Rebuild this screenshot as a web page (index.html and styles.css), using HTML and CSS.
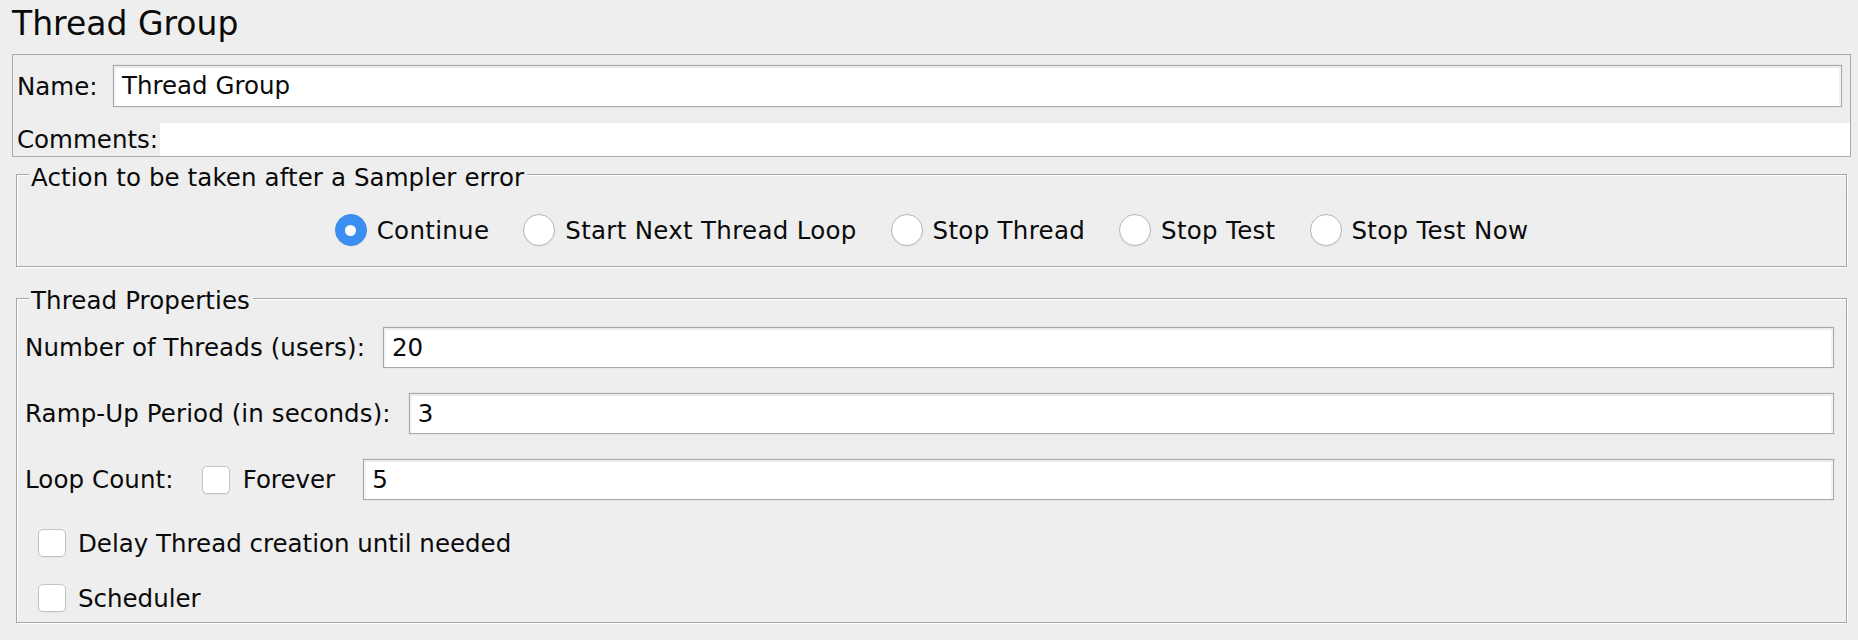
FILE: index.html
```html
<!DOCTYPE html>
<html lang="en">
<head>
<meta charset="utf-8">
<title>Thread Group</title>
<link rel="stylesheet" href="styles.css">
</head>
<body>
<div class="page">
  <h1 class="title">Thread Group</h1>

  <div class="panel">
    <div class="row name-row">
      <label class="name-label">Name:</label>
      <div class="field">Thread Group</div>
    </div>
    <div class="row comments-row">
      <label class="comments-label">Comments:</label>
      <div class="comments-area"></div>
    </div>
  </div>

  <section class="group action-group">
    <div class="group-head"><span class="group-title">Action to be taken after a Sampler error</span></div>
    <div class="group-body radios">
      <div class="radio-item"><span class="radio checked"></span><span>Continue</span></div>
      <div class="radio-item"><span class="radio"></span><span>Start Next Thread Loop</span></div>
      <div class="radio-item"><span class="radio"></span><span>Stop Thread</span></div>
      <div class="radio-item"><span class="radio"></span><span>Stop Test</span></div>
      <div class="radio-item"><span class="radio"></span><span>Stop Test Now</span></div>
    </div>
  </section>

  <section class="group props-group">
    <div class="group-head props-head"><span class="group-title">Thread Properties</span></div>
    <div class="group-body props-body">
      <div class="prop-row">
        <label class="prop-label">Number of Threads (users):</label>
        <div class="field">20</div>
      </div>
      <div class="prop-row">
        <label class="prop-label">Ramp-Up Period (in seconds):</label>
        <div class="field">3</div>
      </div>
      <div class="prop-row loop-row">
        <label class="prop-label">Loop Count:</label>
        <span class="checkbox loop-check"></span>
        <span class="forever">Forever</span>
        <div class="field">5</div>
      </div>
      <div class="check-row delay-row">
        <span class="checkbox"></span>
        <span>Delay Thread creation until needed</span>
      </div>
      <div class="check-row sched-row">
        <span class="checkbox"></span>
        <span>Scheduler</span>
      </div>
    </div>
  </section>
</div>
</body>
</html>
```

FILE: styles.css
```css
html, body {
  margin: 0;
  padding: 0;
  background: #eeeeee;
}

body {
  font-family: "DejaVu Sans", "Liberation Sans", sans-serif;
  font-size: 24.5px;
  color: #0a0a0a;
  width: 1858px;
  height: 640px;
  overflow: hidden;
}

.page {
  padding: 0 7px 0 12px;
}

.title {
  margin: 0;
  height: 54px;
  box-sizing: border-box;
  padding-top: 2px;
  font-size: 33px;
  font-weight: normal;
  line-height: 44px;
}

/* top name/comments panel */
.panel {
  border: 1px solid #a9a9a9;
  padding: 10px 8px 0 4px;
}

.row {
  display: flex;
  align-items: center;
}

.name-row {
  height: 42px;
}

.name-label {
  width: 96px;
  flex: none;
}

.field {
  flex: 1;
  height: 42px;
  box-sizing: border-box;
  background: #fff;
  border: 1px solid #a9a9a9;
  box-shadow: inset 0 2px 0 #ececec, inset 2px 0 0 #f3f3f3, inset -2px 0 0 #f3f3f3, 0 0 0 1px #e6e6e6;
  padding: 0 8px;
  display: flex;
  align-items: center;
  line-height: 28px;
}

.comments-row {
  margin-top: 16px;
  height: 33px;
}

.comments-label {
  flex: none;
}

.comments-area {
  flex: 1;
  align-self: stretch;
  background: #fff;
  margin-left: 2px;
  margin-right: -9px;
  border-right: 1px solid #a9a9a9;
}

/* titled groups */
.group {
  margin: 0 4px;
}

.action-group {
  margin-top: 7px;
}

.props-group {
  margin-top: 20px;
}

.group-head {
  display: flex;
  height: 28px;
  line-height: 28px;
}

.group-head::before {
  content: "";
  flex: none;
  width: 12px;
  margin-top: 10px;
  border-top: 1px solid #a6a6a6;
  border-left: 1px solid #a6a6a6;
  box-shadow: inset 1px 1px 0 #fff;
}

.group-head::after {
  content: "";
  flex: 1;
  margin-top: 10px;
  margin-left: 3px;
  border-top: 1px solid #a6a6a6;
  border-right: 1px solid #a6a6a6;
  box-shadow: inset 0 1px 0 #fff, 1px 0 0 #fff;
}

.props-head::before,
.props-head::after {
  margin-top: 11px;
}

.group-title {
  flex: none;
  padding-left: 2px;
  white-space: nowrap;
  letter-spacing: 0.1px;
}

.group-body {
  border: 1px solid #a6a6a6;
  border-top: none;
  box-shadow: inset 1px 0 0 #fff, 1px 1px 0 #fff;
}

/* radios */
.radios {
  display: flex;
  justify-content: center;
  gap: 34px;
  padding: 22px 0 20px;
}

.radio-item {
  display: flex;
  align-items: center;
  gap: 10px;
  height: 32px;
  white-space: nowrap;
  letter-spacing: 0.3px;
}

.radio {
  width: 32px;
  height: 32px;
  box-sizing: border-box;
  border-radius: 50%;
  background: #fff;
  border: 1px solid #b8b8b8;
  box-shadow: 0 1px 1px rgba(0, 0, 0, 0.06);
  flex: none;
}

.radio.checked {
  background: #3c8ff2;
  border-color: #3a88ea;
  display: flex;
  align-items: center;
  justify-content: center;
}

.radio.checked::after {
  content: "";
  width: 11px;
  height: 11px;
  border-radius: 50%;
  background: #fff;
}

/* thread properties */
.props-body {
  padding: 12px 12px 7px 8px;
}

.prop-row {
  display: flex;
  align-items: center;
  height: 41px;
  margin-bottom: 25px;
}

.prop-row .field {
  height: 41px;
}

.prop-label {
  flex: none;
  margin-right: 18px;
  white-space: nowrap;
  letter-spacing: 0.1px;
}

.loop-row {
  margin-bottom: 0;
}

.loop-row .prop-label {
  margin-right: 0;
}

.checkbox {
  flex: none;
  width: 28px;
  height: 28px;
  box-sizing: border-box;
  background: #fff;
  border: 1px solid #c3c3c3;
  border-radius: 5px;
  box-shadow: 0 1px 1px rgba(0, 0, 0, 0.05);
}

.loop-check {
  margin-left: 28px;
}

.forever {
  margin-left: 13px;
  margin-right: 28px;
}

.check-row {
  display: flex;
  align-items: center;
  gap: 12px;
  height: 34px;
  padding-left: 13px;
}

.delay-row {
  margin-top: 26px;
}

.sched-row {
  margin-top: 21px;
}
```
